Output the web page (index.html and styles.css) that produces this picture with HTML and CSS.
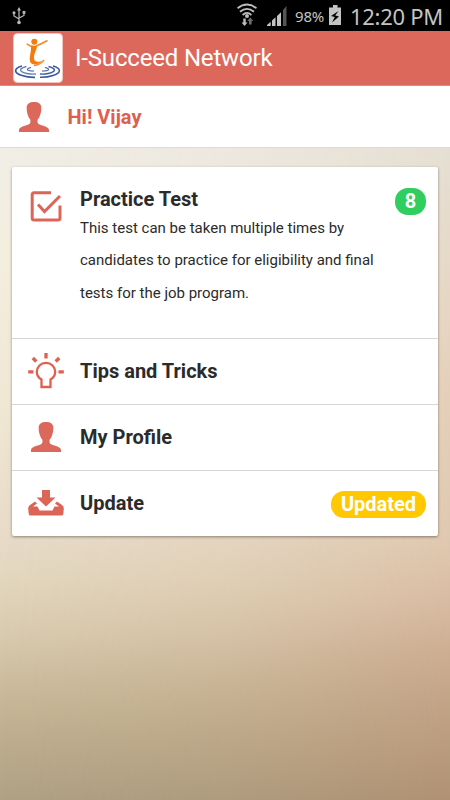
FILE: index.html
```
<!doctype html>
<html lang="en">

<head>
  <meta charset="utf-8">
  <title>I-Succeed Network</title>
  <link rel="stylesheet" href="styles.css">
</head>

<body>
  <!-- shared icons -->
  <svg class="defs" width="0" height="0">
    <symbol id="person" viewBox="0 0 30 30">
      <path d="M15 0C10.500 0 7.600 2 7.700 5.500C7.600 8.500 8 11 9 13.500C9.600 15.500 10.400 16.500 11.300 17.500C11.800 20 11.500 21.500 9.500 22.500C6 24.200 0.300 24.500 0 28V30H30V28C29.700 24.500 24 24.200 20.500 22.500C18.500 21.500 18.200 20 18.700 17.500C19.600 16.500 20.400 15.500 21 13.500C22 11 22.400 8.500 22.300 5.500C22.400 2 19.500 0 15 0Z"/>
    </symbol>
  </svg>

  <div class="statusBar">
    <svg class="usb" width="14" height="18" viewBox="0 0 14 18">
      <path d="M7 2V15M2 6V9L7 12M12 6V8.500L7 11" fill="none" stroke="#b9b9b9" stroke-width="1.200"/>
      <path d="M7 0L9 3.500H5Z" fill="#b9b9b9"/>
      <circle cx="7" cy="15.500" r="1.800" fill="#b9b9b9"/>
      <circle cx="2" cy="5.800" r="1.500" fill="#b9b9b9"/>
      <rect x="10.600" y="4" width="2.800" height="2.800" fill="#b9b9b9"/>
    </svg>
    <svg class="wifi" width="20" height="24" viewBox="0 0 20 24">
      <g fill="none" stroke="#bdbdbd" stroke-width="1.800">
        <path d="M0.500 5.200Q10 -2.200 19.500 5.200"/>
        <path d="M3 8.700Q10 3 17 8.700"/>
        <path d="M5.600 12Q10 7.800 14.400 12"/>
      </g>
      <circle cx="10" cy="13" r="2" fill="#bdbdbd"/>
      <path d="M6.300 15.500H8.700V19.500H10.500L7.500 23L4.500 19.500H6.300Z" fill="#bdbdbd"/>
      <path d="M12 21.500H14.600V18H16.300L13.300 14.500L10.300 18H12Z" fill="#6d6d6d"/>
    </svg>
    <svg class="signal" width="20" height="20" viewBox="0 0 20 20">
      <path d="M0 20V19L3.700 15.800V20ZM5 20V14.500L8.500 11.300V20ZM10 20V10L14 6.200V20Z" fill="#c4c4c4"/>
      <path d="M16 20V4L19.500 0V20Z" fill="#555"/>
    </svg>
    <span class="percent">98%</span>
    <svg class="battery" width="12" height="20" viewBox="0 0 12 20">
      <path d="M4 0H8.500V2.500H12V20H0V2.500H4Z" fill="#c4c4c4"/>
      <path d="M9.500 6L2 11L5.800 12L3 17.500L10 11.500L6.200 10.500Z" fill="#000"/>
    </svg>
    <span class="clock">12:20 PM</span>
  </div>

  <div class="header">
    <svg class="logo" width="50" height="50" viewBox="0 0 50 50">
      <rect x="0.500" y="0.500" width="49" height="49" rx="4" fill="#fff" stroke="#f4c6bf"/>
      <circle cx="21.300" cy="8.800" r="3" fill="#f47c0c"/>
      <path d="M13.700 10.800Q17 13.500 22 13.500Q28 11 34.500 7.500" fill="none" stroke="#f58a2a" stroke-width="1.500"/>
      <path d="M18 13C18.500 19 16 24 17 28.500C18.500 32.500 25 32.500 29.500 27.500C25.500 29.500 21 29.500 21 25C21 20 23.500 18 24 13Z" fill="#f47c0c"/>
      <path d="M21 32.500Q27 32 31 27" fill="none" stroke="#f58a2a" stroke-width="1.300"/>
      <g fill="none" stroke="#3a5a9c">
        <path d="M9 33C1 35 0 40 9 42.500Q15 44.500 22 44.300" stroke-width="1.700"/>
        <path d="M40 33C48 35 49 40 40 42.500Q34 44.500 27 44.300" stroke-width="1.500"/>
        <path d="M13.500 33.500C5 35.500 6 39 14 40.500Q19 41.500 23 41" stroke="#6680b3" stroke-width="1.300"/>
        <path d="M35.500 33.500C44 35.500 43 39 35 40.500Q31 41.500 27 41" stroke-width="1.400"/>
        <path d="M18 34.500C12 36 14 38 21 38" stroke-width="1.100"/>
        <path d="M32 34.500C38 36 36 38 29 38" stroke-width="1.100"/>
      </g>
    </svg>
    <h1>I-Succeed Network</h1>
  </div>

  <div class="greeting">
    <svg class="person"><use href="#person"/></svg>
    <span>Hi! Vijay</span>
  </div>

  <div class="mainBody">
    <div class="card">
      <div class="item test">
        <div class="icon">
          <svg width="32" height="31" viewBox="0 0 32 31">
            <g fill="none" stroke="#dd6558" stroke-width="3">
              <path d="M21 1.800H4Q2.200 1.800 2.200 4V27Q2.200 29 4 29H28Q30 29 30 27V14.500"/>
              <path d="M8 13.500L14.500 20.500L30 5"/>
            </g>
          </svg>
        </div>
        <div class="text">
          <h2>Practice Test</h2>
          <p>This test can be taken multiple times by<br>candidates to practice for eligibility and final<br>tests for the job program.</p>
        </div>
        <span class="badge green">8</span>
      </div>

      <div class="item">
        <div class="icon">
          <svg width="36" height="36" viewBox="0 0 36 36">
            <g fill="none" stroke="#df604e">
              <path d="M13.500 34V26.500Q9 24 8.800 19A9.200 9.200 0 0 1 27.200 19Q27 24 22.500 26.500V34Z" stroke-width="2.300"/>
              <path d="M18 0V5.500M0.200 18.800H5.500M30.500 18.800H35.800M4.800 5L8.300 8.500M31.200 5L27.700 8.500" stroke-width="3.300"/>
            </g>
          </svg>
        </div>
        <h2>Tips and Tricks</h2>
      </div>

      <div class="item">
        <div class="icon">
          <svg class="person"><use href="#person"/></svg>
        </div>
        <h2>My Profile</h2>
      </div>

      <div class="item update">
        <div class="icon">
          <svg width="36" height="26" viewBox="0 0 36 26">
            <g fill="#dd6558">
              <path d="M14 0H22V7.500H27.500L18 16.500L8.500 7.500H14Z"/>
              <path d="M7 11.500L2 15Q0 16.500 0.200 18.500L0.700 24Q1 25.500 2.500 25.500H33.500Q35 25.500 35.300 24L35.800 18.500Q36 16.500 34 15L29 11.500L27 13.500L31 16.500H26.500L24.500 20.500H11.500L9.500 16.500H5L9 13.500Z"/>
            </g>
          </svg>
        </div>
        <h2>Update</h2>
        <span class="badge yellow">Updated</span>
      </div>
    </div>
  </div>
</body>

</html>
```
FILE: styles.css
```
* {
  box-sizing: border-box;
}

body {
  margin: 0;
  height: 800px;
  overflow: hidden;
  font-family: Roboto, "Liberation Sans", sans-serif;
  color: #2b2b2b;
}

h1, h2, p {
  margin: 0;
}

svg {
  display: block;
  flex: none;
}

.defs {
  display: none;
}

/* STATUS BAR */
.statusBar {
  display: flex;
  align-items: flex-start;
  height: 31px;
  padding-left: 12px;
  background: #000;
  color: #c4c4c4;
  font-family: "Noto Sans", sans-serif;
  white-space: nowrap;
}

.usb {
  margin-top: 7px;
}

.wifi {
  margin: 3px 0 0 211px;
}

.signal {
  margin: 6px 0 0 10px;
}

.percent {
  width: 30px;
  margin: 6px 0 0 8px;
  font-size: 15px;
  line-height: 20px;
  letter-spacing: -0.2px;
}

.battery {
  margin: 5px 0 0 4px;
}

.clock {
  margin: 1px 0 0 9px;
  font-size: 22px;
  line-height: 30px;
  letter-spacing: -0.3px;
}

/* HEADER */
.header {
  display: flex;
  align-items: center;
  height: 55px;
  padding: 0 13px;
  background: #dc685b;
  border-bottom: 1px solid #d78e84;
}

.header h1 {
  margin-left: 12px;
  font-size: 24px;
  font-weight: 400;
  line-height: 30px;
  letter-spacing: -0.18px;
  color: #fff;
}

.greeting {
  display: flex;
  align-items: center;
  height: 62px;
  padding: 0 19px 0 19px;
  background: #fff;
  border-bottom: 1px solid #dedbd5;
  color: #dc5f4f;
  font-size: 20px;
  font-weight: 700;
}

.greeting span {
  margin-left: 18.5px;
}

.person {
  width: 30px;
  height: 30px;
  fill: #dc685b;
}

/* LIST */
.mainBody {
  position: relative;
  height: 652px;
  padding: 19px 12px;
  background: linear-gradient(#f1eee8 0, #f4eedf 100px, #f0e8d5 250px, #e7dbc8 392px, #e2d7be 430px, #d9cbb0 485px, #ccbd9d 532px, #bfb090 582px, #afa184 652px);
}

/* pinker tone coming in from the right */
.mainBody::before {
  content: "";
  position: absolute;
  inset: 0;
  background: linear-gradient(#e5dfd3 0, #e6d8c6 130px, #e4cfb9 250px, #dfc8b0 392px, #d8bca2 452px, #cdae92 502px, #c2a487 552px, #b99b7c 602px, #af9173 652px);
  -webkit-mask-image: linear-gradient(to right, transparent, rgba(0, 0, 0, 0.35) 50%, #000);
  mask-image: linear-gradient(to right, transparent, rgba(0, 0, 0, 0.35) 50%, #000);
}

.card {
  position: relative;
  width: 426px;
  background: #fff;
  border-radius: 2px;
  box-shadow: 0 1px 3px rgba(0, 0, 0, 0.4);
}

.item {
  display: flex;
  align-items: center;
  height: 66px;
  padding: 0 12px 0 16px;
  border-bottom: 1px solid #d6d6d6;
}

.item.update {
  height: 65px;
  border-bottom: 0;
}

.item.test {
  align-items: flex-start;
  height: 172px;
  padding-top: 21px;
}

.icon {
  display: flex;
  justify-content: center;
  width: 36px;
  margin-right: 16px;
  padding-bottom: 1px;
}

.test .icon {
  margin-top: 3px;
}

.item h2 {
  padding-bottom: 1px;
  font-size: 20px;
  font-weight: 700;
  line-height: 24px;
}

.test h2 {
  margin-top: -1px;
}

.item p {
  font-size: 15px;
  line-height: 32.4px;
  white-space: nowrap;
}

.text {
  width: 300px;
}

.badge {
  height: 27px;
  margin-left: auto;
  border-radius: 13px;
  color: #fff;
  font-size: 20px;
  font-weight: 700;
  line-height: 27px;
  text-align: center;
}

.green {
  width: 31px;
  background: #2fce5f;
}

.yellow {
  width: 95px;
  margin-top: 1px;
  background: #ffc800;
}
```
